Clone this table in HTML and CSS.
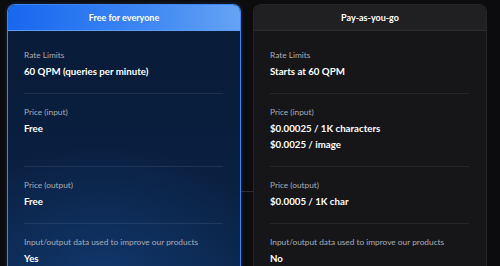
FILE: index.html
```html
<!DOCTYPE html>
<html>
<head>
<meta charset="utf-8">
<link rel="stylesheet" href="styles.css">
</head>
<body>
<div class="plans">
  <section class="card card-free">
    <header class="card-head">Free for everyone</header>
    <div class="card-body">
      <div class="row row-first">
        <div class="label">Rate Limits</div>
        <div class="value">60 QPM (queries per minute)</div>
      </div>
      <div class="row">
        <div class="label">Price (input)</div>
        <div class="value value-2">Free</div>
      </div>
      <div class="row">
        <div class="label">Price (output)</div>
        <div class="value">Free</div>
      </div>
      <div class="row row-last">
        <div class="label">Input/output data used to improve our products</div>
        <div class="value">Yes</div>
      </div>
    </div>
  </section>
  <section class="card card-paid">
    <header class="card-head">Pay-as-you-go</header>
    <div class="card-body">
      <div class="row row-first">
        <div class="label">Rate Limits</div>
        <div class="value">Starts at 60 QPM</div>
      </div>
      <div class="row">
        <div class="label">Price (input)</div>
        <div class="value">$0.00025 / 1K characters</div>
        <div class="value">$0.0025 / image</div>
      </div>
      <div class="row">
        <div class="label">Price (output)</div>
        <div class="value">$0.0005 / 1K char</div>
      </div>
      <div class="row row-last">
        <div class="label">Input/output data used to improve our products</div>
        <div class="value">No</div>
      </div>
    </div>
  </section>
</div>
</body>
</html>
```

FILE: styles.css
```css
html, body {
  margin: 0;
  padding: 0;
  height: 100%;
  overflow: hidden;
}
body {
  background:
    linear-gradient(90deg, transparent 241px, #2a2f38 241px, #2a2f38 253px, transparent 253px) 0 191px / 100% 1px no-repeat,
    #0c0c0e;
  font-family: Lato, "Liberation Sans", sans-serif;
  color: #fff;
}
.plans {
  display: grid;
  grid-template-columns: 234px 234px;
  column-gap: 12px;
  padding: 4px 0 0 7px;
  align-items: start;
}
.card {
  border-radius: 8px 8px 0 0;
  overflow: hidden;
  min-height: 280px;
}
.card-free {
  border: 1px solid #3f86ee;
  border-bottom: none;
  background:
    radial-gradient(ellipse 180px 140px at 40% 100%, rgba(22, 72, 140, 0.55), transparent),
    linear-gradient(180deg, #081a36 0%, #0b2448 100%);
  box-shadow: 0 0 4px rgba(60, 130, 240, 0.25);
}
.card-paid {
  border: 1px solid #26262a;
  border-bottom: none;
  background: #161619;
}
.card-head {
  height: 25px;
  line-height: 25px;
  text-align: center;
  font-size: 9px;
  font-weight: 700;
}
.card-free .card-head {
  background: linear-gradient(90deg, #1767f0 0%, #3f88f3 60%, #65a3f4 100%);
  border-bottom: 1px solid #5e9df2;
}
.card-paid .card-head {
  background: #202023;
  border-bottom: 1px solid #2c2c30;
}
.card-body {
  padding: 0 17px 0 16px;
}
.row {
  padding: 11px 0 14px;
  border-bottom: 1px solid rgba(255, 255, 255, 0.09);
}
.card-paid .row {
  border-bottom-color: #26262a;
}
.row-first {
  padding-top: 17px;
}
.row-last {
  border-bottom: none;
}
.label {
  font-size: 8.3px;
  line-height: 14px;
  color: #a9adb6;
  margin-bottom: 1px;
  white-space: nowrap;
}
.value {
  font-size: 9.7px;
  line-height: 16px;
  font-weight: 700;
  color: #ffffff;
  white-space: nowrap;
}
.value-2 {
  min-height: 32px;
}
```
